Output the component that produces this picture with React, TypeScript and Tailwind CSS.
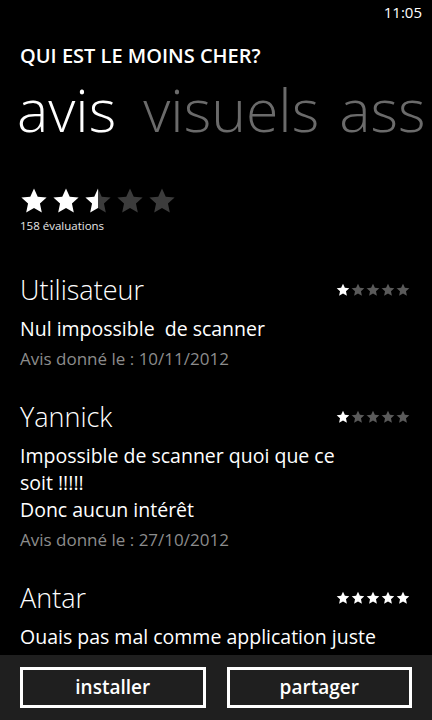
import { useId } from 'react';

const STAR = 'M12 1.2l3.2 7.1 7.6.8-5.7 5.1 1.6 7.6L12 17.9l-6.7 3.9 1.6-7.6-5.7-5.1 7.6-.8z';

function Star({ size, fill, off }: { size: number; fill: number; off: string }) {
  const id = useId();
  return (
    <svg width={size} height={size} viewBox="0 0 24 24">
      <defs>
        <linearGradient id={id} x1="0" x2="1" y1="0" y2="0">
          <stop offset={fill} stopColor="#ffffff" />
          <stop offset={fill} stopColor={off} />
        </linearGradient>
      </defs>
      <path d={STAR} fill={`url(#${id})`} />
    </svg>
  );
}

function Stars({ value, size, gap, off }: { value: number; size: number; gap: string; off: string }) {
  return (
    <div className={`flex ${gap}`}>
      {[0, 1, 2, 3, 4].map((i) => (
        <Star key={i} size={size} off={off} fill={Math.max(0, Math.min(1, value - i))} />
      ))}
    </div>
  );
}

const reviews = [
  { name: 'Utilisateur', stars: 1, body: ['Nul impossible\u00a0 de scanner'], date: '10/11/2012' },
  {
    name: 'Yannick',
    stars: 1,
    body: ['Impossible de scanner quoi que ce', 'soit !!!!!', 'Donc aucun intérêt'],
    date: '27/10/2012',
  },
  // only the first line shows above the app bar
  { name: 'Antar', stars: 5, body: ['Ouais pas mal comme application juste'], date: '' },
];

export default function App() {
  return (
    <div className="w-[432px] h-[720px] bg-black text-white flex flex-col overflow-hidden font-['Open_Sans','Noto_Sans',sans-serif]">
      <div className="h-[655px] overflow-hidden">
        {/* status bar */}
        <div className="flex justify-end pr-[10px] pt-[2px] h-[20px] text-[15px] leading-[20px]">11:05</div>

        {/* header */}
        <div className="mt-[24px] pl-5 text-[20px] leading-[24px] font-semibold">QUI EST LE MOINS CHER?</div>
        <div className="mt-[12px] pl-[17px] flex whitespace-nowrap text-[59px] leading-none font-light">
          <span>avis</span>
          <span className="ml-[27px] text-[#6b6b6b]">visuels</span>
          <span className="ml-[20px] text-[#6b6b6b]">ass</span>
        </div>

        {/* rating summary */}
        <div className="mt-[48px] pl-[20px]">
          <Stars value={2.5} size={28} gap="gap-[4px]" off="#3c3c3c" />
          <div className="mt-[4px] text-[11.5px] leading-[14px] text-[#e6e6e6]">158 évaluations</div>
        </div>

        {/* reviews */}
        <div className="mt-[40px] pl-5 pr-[22px]">
          {reviews.map((r) => (
            <div key={r.name} className="mb-[28px]">
              <div className="flex items-center justify-between">
                <div className="text-[27px] leading-[34px] font-light">{r.name}</div>
                <Stars value={r.stars} size={14} gap="gap-[1px]" off="#5a5a5a" />
              </div>
              <div className="mt-2 text-[19.5px] leading-[27px]">
                {r.body.map((l) => (
                  <div key={l}>{l}</div>
                ))}
              </div>
              {r.date && (
                <div className="mt-[4px] text-[17px] leading-[26px] text-[#8c8c8c]">Avis donné le : {r.date}</div>
              )}
            </div>
          ))}
        </div>
      </div>

      {/* app bar */}
      <div className="h-[65px] bg-[#1f1f1f] flex gap-[21px] px-5 pt-3">
        <button className="flex-1 h-[41px] border-[3px] border-white text-[19px] font-semibold leading-none">installer</button>
        <button className="flex-1 h-[41px] border-[3px] border-white text-[19px] font-semibold leading-none">partager</button>
      </div>
    </div>
  );
}
